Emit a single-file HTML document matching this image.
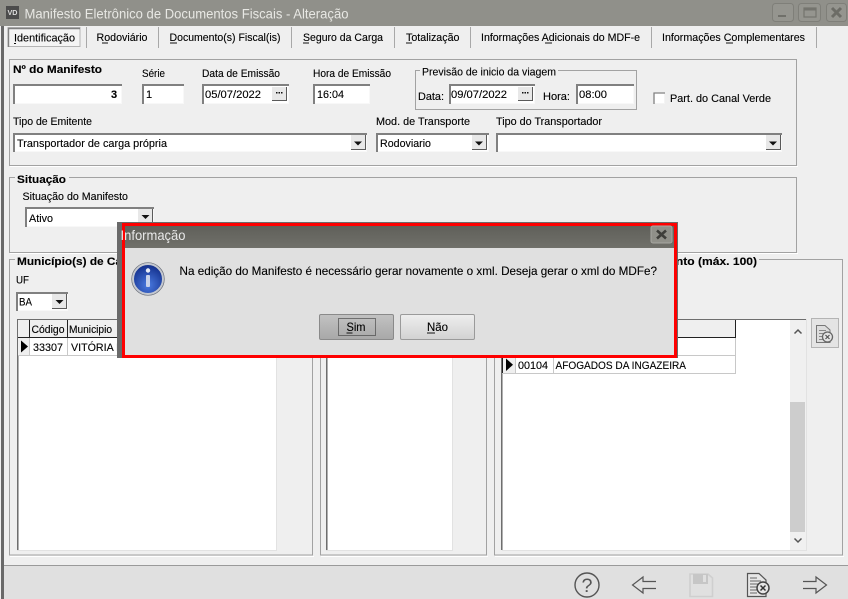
<!DOCTYPE html>
<html lang="pt-BR"><head><meta charset="utf-8"><title>Manifesto Eletrônico de Documentos Fiscais - Alteração</title>
<style>
html,body{margin:0;padding:0;background:#efefef;overflow:hidden}
svg{display:block}
text{font-family:"Liberation Sans",sans-serif;font-size:11px;fill:#000;stroke:#000;stroke-width:.12}
.b{font-weight:bold}
</style></head><body>
<svg width="848" height="599" viewBox="0 0 848 599" xmlns="http://www.w3.org/2000/svg">
<defs>
<radialGradient id="ib" cx="50%" cy="70%" r="65%"><stop offset="0" stop-color="#4a7ae0"/><stop offset="1" stop-color="#14318e"/></radialGradient>
<linearGradient id="tb" x1="0" y1="0" x2="0" y2="1"><stop offset="0" stop-color="#5f5f59"/><stop offset="1" stop-color="#70706a"/></linearGradient>
<linearGradient id="bs" x1="0" y1="0" x2="0" y2="1"><stop offset="0" stop-color="#c2c2c2"/><stop offset="1" stop-color="#a8a8a8"/></linearGradient>
<linearGradient id="bn" x1="0" y1="0" x2="0" y2="1"><stop offset="0" stop-color="#eeeeee"/><stop offset="1" stop-color="#d2d2d2"/></linearGradient>
</defs>
<rect width="848" height="599" fill="#efefef"/>
<rect x="1" y="0" width="3" height="599" fill="#696969"/>
<!-- title bar -->
<rect x="0" y="0" width="848" height="26" fill="#90908a"/>
<rect x="6" y="6" width="13" height="13" fill="#4c4c4c"/>
<text x="7.5" y="15" style="font-size:7px;fill:#ddd;stroke:none;font-weight:bold" textLength="10" lengthAdjust="spacingAndGlyphs">VD</text>
<text x="24.5" y="18.5" style="font-size:14px;fill:#e8e8e4;stroke:none" textLength="324" lengthAdjust="spacingAndGlyphs">Manifesto Eletrônico de Documentos Fiscais - Alteração</text>
<g fill="#95958f" stroke="#7f7f79"><rect x="772.5" y="3.5" width="21" height="18" rx="3"/><rect x="798.5" y="3.5" width="22" height="18" rx="3"/><rect x="826.5" y="3.5" width="20" height="18" rx="3"/></g>
<rect x="778" y="15" width="8" height="2" fill="#70706a"/>
<rect x="804" y="8" width="12" height="9" fill="none" stroke="#74746e" stroke-width="1.2"/><rect x="804" y="8" width="12" height="2.5" fill="#74746e"/>
<path d="M832 8l9 9M841 8l-9 9" stroke="#6c6c66" stroke-width="3"/>
<!-- tabs -->
<rect x="8" y="27.5" width="72" height="19" fill="#f4f4f4" stroke="#b4b4b4"/>
<path d="M8.500 47V28.500H80" fill="none" stroke="#808080" stroke-width="1.400"/>
<g fill="#a8a8a8"><rect x="86" y="27" width="1" height="21"/><rect x="158" y="27" width="1" height="21"/><rect x="291" y="27" width="1" height="21"/><rect x="394" y="27" width="1" height="21"/><rect x="470" y="27" width="1" height="21"/><rect x="651" y="27" width="1" height="21"/><rect x="816" y="27" width="1" height="21"/></g>
<text x="14" y="41.5" textLength="61" lengthAdjust="spacingAndGlyphs">Identificação</text>
<text x="96.5" y="41" textLength="51" lengthAdjust="spacingAndGlyphs">Rodoviário</text>
<text x="169.5" y="41" textLength="111" lengthAdjust="spacingAndGlyphs">Documento(s) Fiscal(is)</text>
<text x="303" y="41" textLength="80" lengthAdjust="spacingAndGlyphs">Seguro da Carga</text>
<text x="406" y="41" textLength="53.5" lengthAdjust="spacingAndGlyphs">Totalização</text>
<text x="481" y="41" textLength="159" lengthAdjust="spacingAndGlyphs">Informações Adicionais do MDF-e</text>
<text x="662" y="41" textLength="143" lengthAdjust="spacingAndGlyphs">Informações Complementares</text>
<g fill="#111"><rect x="14" y="43" width="2" height="1"/><rect x="102" y="42.5" width="6" height="1"/><rect x="170" y="42.5" width="7" height="1"/><rect x="303" y="42.5" width="6" height="1"/><rect x="406" y="42.5" width="6" height="1"/><rect x="545" y="42.5" width="7" height="1"/><rect x="726" y="42.5" width="7" height="1"/></g>
<!-- group boxes -->
<g fill="none" stroke="#a2a2a2">
<rect x="9.5" y="59.5" width="787" height="106"/>
<rect x="9.5" y="177.5" width="787" height="75"/>
<rect x="9.5" y="259.5" width="303" height="295.500"/>
<rect x="320.5" y="259.5" width="166" height="295.500"/>
<rect x="494.5" y="259.5" width="348" height="295.500"/>
<rect x="415.5" y="70.5" width="221" height="39"/>
</g>
<g fill="#fff"><rect x="10" y="166" width="788" height="1"/><rect x="10" y="253" width="788" height="1"/><rect x="10" y="556" width="304" height="1"/><rect x="321" y="556" width="167" height="1"/><rect x="495" y="556" width="349" height="1"/></g>
<!-- inputs: white face, light outer edge -->
<g fill="#fff" stroke="#f8f8f8">
<rect x="13.5" y="84.5" width="108" height="19"/>
<rect x="142.5" y="84.5" width="41" height="19"/>
<rect x="202.5" y="84.5" width="86" height="19"/>
<rect x="313.5" y="84.5" width="56" height="19"/>
<rect x="449.5" y="84.5" width="85" height="19"/>
<rect x="576.5" y="84.5" width="57" height="19"/>
<rect x="13.5" y="133.5" width="353" height="18"/>
<rect x="376.5" y="133.5" width="112" height="18"/>
<rect x="496.5" y="133.5" width="285" height="18"/>
<rect x="25.5" y="207.5" width="128" height="19"/>
<rect x="16.5" y="292.5" width="51" height="18"/>
</g>
<g fill="none" stroke="#808080" stroke-width="2">
<path d="M14 104V85H122"/><path d="M143 104V85H184"/><path d="M203 104V85H289"/><path d="M314 104V85H370"/><path d="M450 104V85H535"/><path d="M577 104V85H634"/>
<path d="M14 152V134H367"/><path d="M377 152V134H489"/><path d="M497 152V134H782"/><path d="M26 227V208H154"/><path d="M17 311V293H68"/>
</g>
<g fill="#e8e8e8" stroke="none">
<rect x="272" y="87" width="15" height="14"/><rect x="518" y="87" width="15" height="14"/>
<rect x="351" y="135" width="15" height="15"/><rect x="472" y="135" width="15" height="15"/><rect x="766" y="135" width="15" height="15"/><rect x="138" y="209" width="15" height="15"/><rect x="52" y="294" width="15" height="15"/>
</g>
<g fill="none" stroke="#5a5a5a">
<path d="M272 100.500H286.500V87"/><path d="M518 100.500H532.500V87"/>
<path d="M351 149.500H365.500V135"/><path d="M472 149.500H486.500V135"/><path d="M766 149.500H780.500V135"/><path d="M138 223.500H152.500V209"/><path d="M52 308.500H66.500V294"/>
</g>
<g fill="#111"><path d="M276 92h1.500v1.500H276zM278.500 92h1.500v1.500h-1.500zM281 92h1.500v1.500H281z"/><path d="M522 92h1.500v1.500H522zM524.500 92h1.500v1.500h-1.500zM527 92h1.500v1.500H527z"/>
<path d="M354 141.500h8l-4 4z"/><path d="M475 141.500h8l-4 4z"/><path d="M769 141.500h8l-4 4z"/><path d="M141.500 215h8l-4 4z"/><path d="M55.500 300h8l-4 4z"/></g>
<rect x="653.500" y="92.500" width="11" height="11" fill="#fff" stroke="#f4f4f4"/>
<path d="M654 104V93H665" fill="none" stroke="#808080" stroke-width="1.300"/>
<!-- labels -->
<text class="b" x="13" y="73" textLength="89" lengthAdjust="spacingAndGlyphs">Nº do Manifesto</text>
<text x="142" y="77" textLength="23" lengthAdjust="spacingAndGlyphs">Série</text>
<text x="202" y="77" textLength="78" lengthAdjust="spacingAndGlyphs">Data de Emissão</text>
<text x="313" y="77" textLength="78" lengthAdjust="spacingAndGlyphs">Hora de Emissão</text>
<rect x="420" y="68" width="138" height="8" fill="#efefef"/>
<text x="422" y="75.500" textLength="134" lengthAdjust="spacingAndGlyphs">Previsão de inicio da viagem</text>
<text class="b" x="111" y="98" textLength="7">3</text>
<text x="146" y="98">1</text>
<text x="205" y="98" textLength="56" lengthAdjust="spacingAndGlyphs">05/07/2022</text>
<text x="317" y="98" textLength="27" lengthAdjust="spacingAndGlyphs">16:04</text>
<text x="418" y="100" textLength="26" lengthAdjust="spacingAndGlyphs">Data:</text>
<text x="451" y="98" textLength="56" lengthAdjust="spacingAndGlyphs">09/07/2022</text>
<text x="543" y="100" textLength="27" lengthAdjust="spacingAndGlyphs">Hora:</text>
<text x="579" y="98" textLength="28" lengthAdjust="spacingAndGlyphs">08:00</text>
<text x="670" y="102" textLength="101" lengthAdjust="spacingAndGlyphs">Part. do Canal Verde</text>
<text x="13" y="125" textLength="79" lengthAdjust="spacingAndGlyphs">Tipo de Emitente</text>
<text x="376" y="125" textLength="94" lengthAdjust="spacingAndGlyphs">Mod. de Transporte</text>
<text x="496" y="125" textLength="106" lengthAdjust="spacingAndGlyphs">Tipo do Transportador</text>
<text x="17" y="147" textLength="150" lengthAdjust="spacingAndGlyphs">Transportador de carga própria</text>
<text x="380" y="147" textLength="51" lengthAdjust="spacingAndGlyphs">Rodoviario</text>
<rect x="15" y="175" width="54" height="6" fill="#efefef"/>
<text class="b" x="17" y="183" textLength="49" lengthAdjust="spacingAndGlyphs">Situação</text>
<text x="22.500" y="200" textLength="105.500" lengthAdjust="spacingAndGlyphs">Situação do Manifesto</text>
<text x="29" y="222" textLength="24" lengthAdjust="spacingAndGlyphs">Ativo</text>
<rect x="15" y="256" width="110" height="8" fill="#efefef"/>
<text class="b" x="17" y="265" textLength="170" lengthAdjust="spacingAndGlyphs">Município(s) de Carregamento</text>
<rect x="499" y="256" width="260" height="8" fill="#efefef"/>
<text class="b" x="501" y="265" textLength="256" lengthAdjust="spacingAndGlyphs">Município(s) de Descarregamento (máx. 100)</text>
<text x="16" y="283.500" textLength="13" lengthAdjust="spacingAndGlyphs">UF</text>
<text x="19" y="305.500" textLength="13" lengthAdjust="spacingAndGlyphs">BA</text>
<!-- grids -->
<g fill="#fff">
<rect x="17" y="319" width="259" height="231"/><rect x="326" y="319" width="126" height="231"/><rect x="502" y="319" width="288" height="231"/>
</g>
<g fill="#6e6e6e"><rect x="17" y="319" width="259" height="1"/><rect x="17" y="319" width="1" height="231"/><rect x="326" y="319" width="126" height="1"/><rect x="326" y="319" width="1" height="231"/><rect x="501" y="319" width="305" height="1"/><rect x="501" y="319" width="1" height="231"/></g>
<g fill="#b0b0b0"><rect x="18" y="320" width="1" height="230"/><rect x="327" y="320" width="1" height="230"/><rect x="502" y="320" width="1" height="230"/></g>
<g fill="#e2e2e2"><rect x="17" y="550" width="260" height="1"/><rect x="276" y="319" width="1" height="232"/><rect x="326" y="550" width="127" height="1"/><rect x="452" y="319" width="1" height="232"/><rect x="502" y="550" width="305" height="1"/><rect x="806" y="319" width="1" height="232"/></g>
<!-- grid1 -->
<rect x="18" y="320" width="100" height="17" fill="#efefef"/>
<path d="M18 337.500H118M29.500 320V337M67.500 320V337" stroke="#222" fill="none"/>
<path d="M18 355.500H118M29.500 338V355M67.500 338V355" stroke="#c8c8c8" fill="none"/>
<rect x="18" y="338" width="11" height="17" fill="#efefef"/>
<path d="M21 340.500V352.500L28 346.500Z" fill="#000"/>
<text x="31.500" y="333" textLength="33" lengthAdjust="spacingAndGlyphs">Código</text>
<text x="69" y="333" textLength="43" lengthAdjust="spacingAndGlyphs">Municipio</text>
<text x="33" y="351" textLength="30" lengthAdjust="spacingAndGlyphs">33307</text>
<text x="71" y="351" textLength="125" lengthAdjust="spacingAndGlyphs">VITÓRIA DA CONQUISTA</text>
<!-- grid3 -->
<rect x="503" y="320" width="233" height="17" fill="#efefef"/>
<path d="M502 337.500H736M735.500 320V337" stroke="#222" fill="none"/>
<path d="M515.500 338V373M553.500 338V373M502 355.500H736M502 373.500H736M735.500 338V373" stroke="#c8c8c8" fill="none"/>
<rect x="503" y="356" width="12" height="17" fill="#efefef"/>
<path d="M506 358.500V371L513 364.800Z" fill="#000"/>
<path d="M502.500 356V373" stroke="#222"/>
<text x="518" y="369" textLength="30" lengthAdjust="spacingAndGlyphs">00104</text>
<text x="555.500" y="369" textLength="130.500" lengthAdjust="spacingAndGlyphs">AFOGADOS DA INGAZEIRA</text>
<!-- scrollbar -->
<rect x="790" y="320" width="16" height="230" fill="#f0f0f0"/>
<rect x="790" y="402" width="15" height="130" fill="#cdcdcd"/>
<path d="M794.500 333.500L798 330L801.500 333.500" fill="none" stroke="#555" stroke-width="1.500"/>
<path d="M794.500 538.500L798 542L801.500 538.500" fill="none" stroke="#555" stroke-width="1.500"/>
<!-- side button -->
<rect x="811.500" y="318.500" width="27" height="29" fill="#e4e4e4" stroke="#b4b4b4"/>
<path d="M816.500 325.500H825L830 330V342.500H816.500Z" fill="#ddd" stroke="#777"/>
<path d="M819 330.500H826M819 333.500H826M819 336.500H824M819 339.500H824" stroke="#888"/>
<circle cx="827.500" cy="337" r="5" fill="#e4e4e4" stroke="#666" stroke-width="1.300"/>
<path d="M825.500 335L829.500 339M829.500 335L825.500 339" stroke="#555" stroke-width="1.200"/>
<!-- bottom bar -->
<rect x="4" y="565" width="844" height="1" fill="#9a9a9a"/>
<rect x="4" y="566" width="844" height="33" fill="#e0e0e0"/>
<circle cx="587" cy="585" r="12" fill="none" stroke="#555" stroke-width="1.400"/>
<text x="581.500" y="592" style="font-size:19px;fill:#555;stroke:none" textLength="11" lengthAdjust="spacingAndGlyphs">?</text>
<path d="M656 581.500H643V577L632.500 585L643 593V588.500H656" fill="none" stroke="#555" stroke-width="1.200"/>
<path d="M803 581.500H816V577L826.500 585L816 593V588.500H803" fill="none" stroke="#555" stroke-width="1.200"/>
<path d="M690 574H708L712.500 578V596.500H690Z" fill="#e0e0e0" stroke="#cfcfcf" stroke-width="1.600"/>
<rect x="693" y="574" width="15" height="10" fill="#c6c6c6"/><rect x="703" y="575" width="3" height="7" fill="#e0e0e0"/>
<path d="M747.500 573.500H759L766 580V596.500H747.500Z" fill="#e6e6e6" stroke="#555" stroke-width="1.200"/>
<path d="M750 578H757M750 581H761M750 584H761M750 587H759M750 590H757M750 593H757" stroke="#666"/>
<circle cx="763" cy="588" r="6" fill="#e6e6e6" stroke="#444" stroke-width="1.500"/>
<path d="M760.500 585.500L765.500 590.500M765.500 585.500L760.500 590.500" stroke="#333" stroke-width="1.500"/>
<!-- dialog -->
<rect x="117" y="222" width="561" height="136" fill="#6a6a6a"/>
<rect x="125" y="225" width="549" height="23" fill="url(#tb)"/>
<rect x="125" y="248" width="549" height="107" fill="#e0e0e0"/>
<path d="M123.500 224.500H675.500V356.500H123.500Z" fill="none" stroke="#fe0000" stroke-width="3"/>
<text x="120.500" y="240" style="font-size:14px;fill:#e8e8e8;stroke:none" textLength="65" lengthAdjust="spacingAndGlyphs">Informação</text>
<rect x="651" y="226" width="21" height="17" rx="2" fill="#909089" stroke="#a8a8a2"/>
<path d="M657 230.500L666 238.500M666 230.500L657 238.500" stroke="#3e3e3a" stroke-width="2.600"/>
<circle cx="148" cy="279" r="15" fill="url(#ib)" stroke="#c4c8d0" stroke-width="2"/>
<circle cx="148" cy="279" r="16.300" fill="none" stroke="#6a6f7a" stroke-width=".7"/>
<circle cx="148" cy="270.500" r="2.200" fill="#e8ecf6"/>
<rect x="146" y="275" width="4" height="12" rx="1" fill="#c8d2ea"/>
<text x="179.500" y="275" style="font-size:12px" textLength="477.500" lengthAdjust="spacingAndGlyphs">Na edição do Manifesto é necessário gerar novamente o xml. Deseja gerar o xml do MDFe?</text>
<rect x="319.500" y="314.500" width="74" height="25" rx="1.500" fill="url(#bs)" stroke="#8a8a8a"/>
<rect x="338.500" y="318.500" width="37" height="17" fill="none" stroke="#222" stroke-dasharray="1 1"/>
<text x="346.500" y="331" style="font-size:12px" textLength="19" lengthAdjust="spacingAndGlyphs">Sim</text>
<rect x="346.500" y="332.500" width="6" height="1" fill="#111"/>
<rect x="400.500" y="314.500" width="74" height="25" rx="1.500" fill="url(#bn)" stroke="#9a9a9a"/>
<text x="427" y="331" style="font-size:12px" textLength="21" lengthAdjust="spacingAndGlyphs">Não</text>
<rect x="427" y="332.500" width="8" height="1" fill="#111"/>
</svg>
</body></html>
